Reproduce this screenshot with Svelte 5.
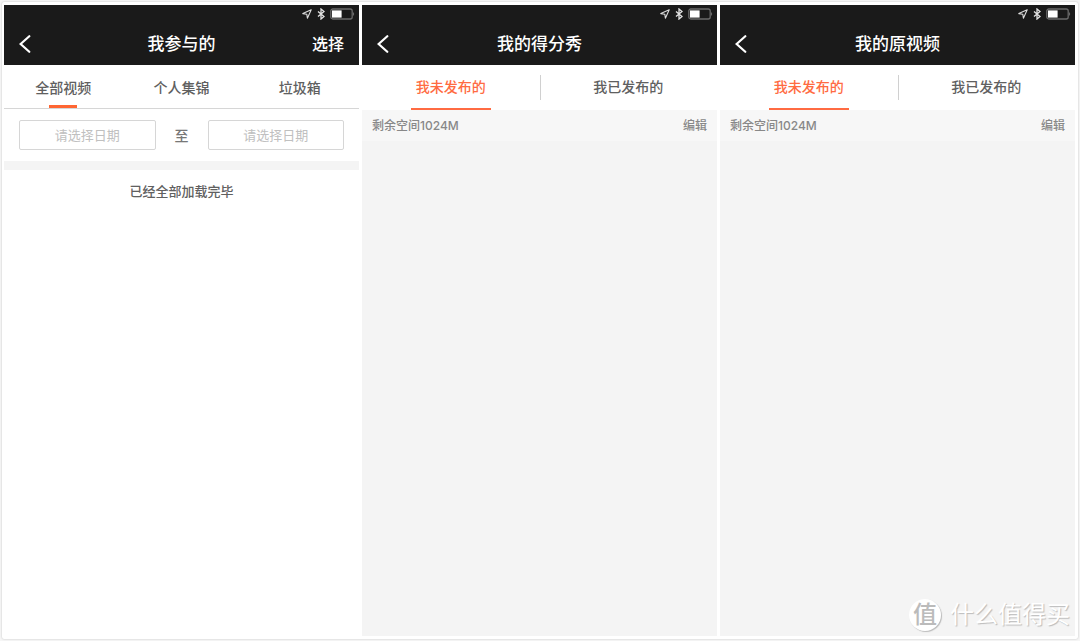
<script lang="ts">
  const filters = ["全部视频", "个人集锦", "垃圾箱"];
  const tabs = ["我未发布的", "我已发布的"];
  const storagePages = ["我的得分秀", "我的原视频"];

  let filter = $state(0);
  let start = $state("");
  let end = $state("");
  let active = $state([0, 0]);
</script>

{#snippet header(title: string, action: string)}
  <header>
    <div class="status">
      <svg width="10" height="10" viewBox="0 0 10 10" fill="none" stroke="#ddd">
        <path d="M9.2 0.8 L0.8 4.6 L4.8 5.2 L5.4 9.2 Z" stroke-width="1.1" stroke-linejoin="round" />
      </svg>
      <svg width="8" height="12" viewBox="0 0 8 12" fill="none" stroke="#e4e4e4">
        <path d="M1 3.5 L7 8.5 L4 11 V1 L7 3.5 L1 8.5" stroke-width="1.3" />
      </svg>
      <svg class="battery" width="25" height="12" viewBox="0 0 25 12">
        <rect x="0.8" y="1" width="21.4" height="10" rx="2" fill="none" stroke="#6a6a6a" stroke-width="1.3" />
        <rect x="2" y="2.4" width="9.6" height="7.2" fill="#fff" />
        <path d="M23 4 Q25.4 6 23 8 Z" fill="#6a6a6a" />
      </svg>
    </div>
    <div class="nav">
      <button class="back" aria-label="返回">
        <svg width="12" height="18" viewBox="0 0 12 18" fill="none" stroke="#fff">
          <path d="M10.3 1.2 L1.6 9 L10.3 16.8" stroke-width="2.2" stroke-linecap="round" />
        </svg>
      </button>
      <h1>{title}</h1>
      {#if action}
        <button class="action">{action}</button>
      {:else}
        <span></span>
      {/if}
    </div>
  </header>
{/snippet}

<main>
  <section>
    {@render header("我参与的", "选择")}
    <nav class="filters">
      {#each filters as name, i}
        <button class:active={filter === i} onclick={() => (filter = i)}>{name}</button>
      {/each}
    </nav>
    <div class="dates">
      <input type="text" aria-label="开始日期" placeholder="请选择日期" bind:value={start} />
      <span>至</span>
      <input type="text" aria-label="结束日期" placeholder="请选择日期" bind:value={end} />
    </div>
    <p class="done">已经全部加载完毕</p>
  </section>

  {#each storagePages as title, page}
    <section class="storage">
      {@render header(title, "")}
      <nav class="tabs">
        {#each tabs as name, i}
          <button class:active={active[page] === i} onclick={() => (active[page] = i)}>
            <span>{name}</span>
          </button>
        {/each}
      </nav>
      <div class="space">
        <span>剩余空间1024M</span>
        <button>编辑</button>
      </div>
    </section>
  {/each}

  <div class="watermark">
    <span class="seal">值</span>
    <span>什么值得买</span>
  </div>
</main>

<style>
  :global(body) {
    background: #f6f6f6;
  }

  main {
    position: relative;
    box-sizing: border-box;
    display: grid;
    grid-template-columns: repeat(3, minmax(0, 1fr));
    gap: 3px;
    min-height: calc(100vh - 4px);
    margin: 2px;
    padding: 3px 3px 3px 2px;
    border-radius: 2px;
    background: #fff;
    box-shadow: 0 0 2px #bbb;
    color: #606060;
    font-family: Inter, "Noto Sans CJK SC", sans-serif;
    font-size: 14px;
    font-weight: 500;
  }

  button {
    padding: 0;
    border: 0;
    background: none;
    color: inherit;
    font: inherit;
    cursor: pointer;
  }

  header {
    height: 60px;
    background: #1a1a1a;
    color: #fff;
  }

  .status {
    display: flex;
    justify-content: flex-end;
    align-items: center;
    gap: 5px;
    height: 18px;
    padding-right: 4px;
  }

  .nav {
    display: grid;
    grid-template-columns: 1fr auto 1fr;
    align-items: center;
    height: 42px;
    padding: 0 15px;
  }

  .back {
    display: flex;
    justify-self: start;
  }

  h1 {
    margin: 0;
    font-size: 17px;
    font-weight: 500;
    line-height: 24px;
  }

  .action {
    justify-self: end;
    font-size: 16px;
    line-height: 24px;
  }

  .filters {
    display: grid;
    grid-template-columns: repeat(3, 1fr);
    height: 43px;
    border-bottom: 1px solid #d6d6d6;
  }

  .filters button {
    position: relative;
  }

  .filters .active::after {
    content: "";
    position: absolute;
    bottom: 0;
    left: 50%;
    width: 28px;
    height: 3px;
    margin-left: -14px;
    background: #ff6633;
  }

  .dates {
    display: flex;
    align-items: center;
    gap: 19px;
    padding: 11px 15px;
    border-bottom: 9px solid #f4f4f4;
  }

  .dates span {
    color: #777;
  }

  .dates input {
    box-sizing: border-box;
    flex: 1;
    min-width: 0;
    height: 30px;
    padding: 0 8px;
    border: 1px solid #d6d6d6;
    border-radius: 2px;
    background: #fff;
    color: #606060;
    font: inherit;
    font-size: 13px;
    font-weight: 400;
    text-align: center;
  }

  .dates input::placeholder {
    color: #c0c0c0;
    opacity: 1;
  }

  .done {
    margin: 11px 0;
    font-size: 13px;
    line-height: 20px;
    text-align: center;
  }

  .storage {
    background: #f4f4f4;
  }

  .tabs {
    display: grid;
    grid-template-columns: 1fr 1fr;
    height: 45px;
    background: #fff;
  }

  .tabs button {
    position: relative;
    display: flex;
    justify-content: center;
  }

  .tabs button + button::before {
    content: "";
    position: absolute;
    top: 10px;
    left: 0;
    height: 25px;
    border-left: 1px solid #d0d0d0;
  }

  .tabs span {
    box-sizing: border-box;
    height: 45px;
    padding: 0 5px;
    border-bottom: 2px solid transparent;
    line-height: 44px;
  }

  .tabs .active {
    color: #ff6b42;
  }

  .tabs .active span {
    border-color: #ff6b42;
  }

  .space {
    display: flex;
    justify-content: space-between;
    align-items: center;
    height: 31px;
    padding: 0 10px;
    background: #f7f7f7;
    color: #888;
    font-size: 12px;
    line-height: 18px;
  }

  .watermark {
    position: absolute;
    right: 8px;
    bottom: 6px;
    display: flex;
    align-items: center;
    gap: 9px;
    color: #fff;
    font-size: 24px;
    font-weight: 400;
    line-height: 36px;
    text-shadow: 1px 1px 1px #bbb;
  }

  .seal {
    width: 32px;
    height: 32px;
    border-radius: 50%;
    background: #fff;
    box-shadow: 1px 1px 1px #bbb;
    color: #bbb;
    font-weight: 500;
    line-height: 32px;
    text-align: center;
    text-shadow: none;
  }
</style>
